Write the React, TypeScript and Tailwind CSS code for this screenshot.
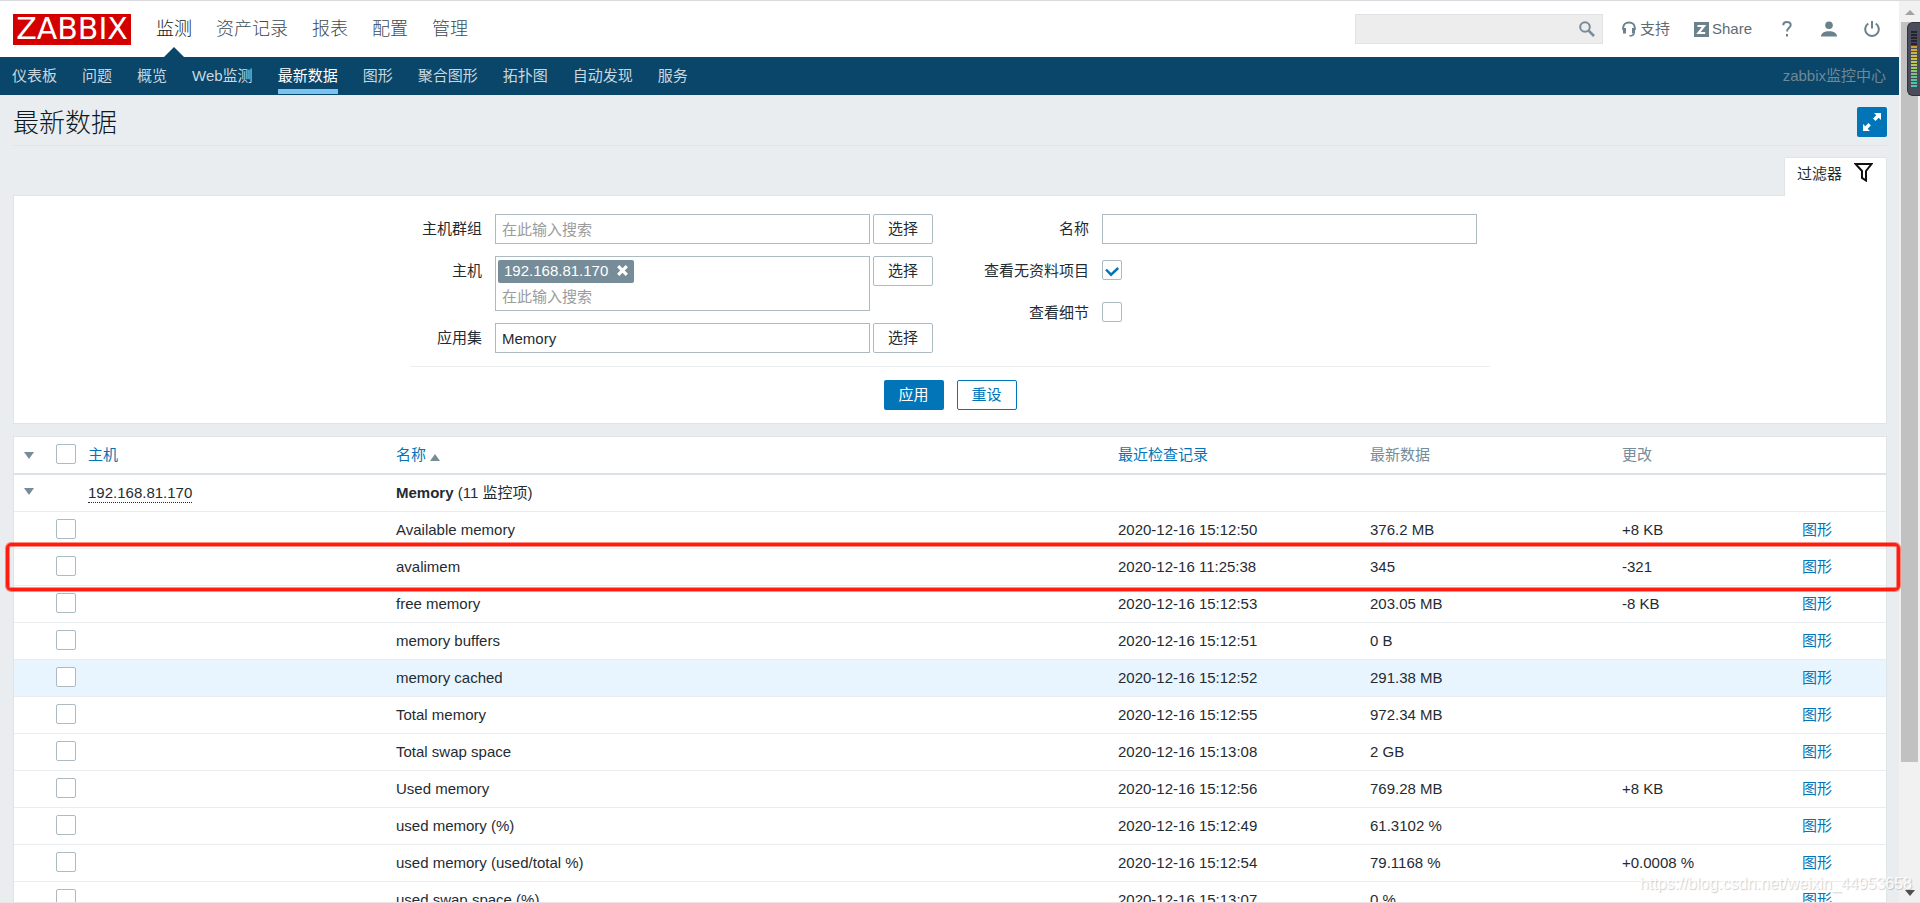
import { useState } from 'react'
import type { InputHTMLAttributes, ReactNode } from 'react'
import clsx from 'clsx'

type Item = {
  name: string
  lastCheck: string
  value: string
  change?: string
  hovered?: boolean
  marked?: boolean
}

const mainMenu = ['监测', '资产记录', '报表', '配置', '管理']
const subMenu = ['仪表板', '问题', '概览', 'Web监测', '最新数据', '图形', '聚合图形', '拓扑图', '自动发现', '服务']

const items: Item[] = [
  { name: 'Available memory', lastCheck: '2020-12-16 15:12:50', value: '376.2 MB', change: '+8 KB' },
  { name: 'avalimem', lastCheck: '2020-12-16 11:25:38', value: '345', change: '-321', marked: true },
  { name: 'free memory', lastCheck: '2020-12-16 15:12:53', value: '203.05 MB', change: '-8 KB' },
  { name: 'memory buffers', lastCheck: '2020-12-16 15:12:51', value: '0 B' },
  { name: 'memory cached', lastCheck: '2020-12-16 15:12:52', value: '291.38 MB', hovered: true },
  { name: 'Total memory', lastCheck: '2020-12-16 15:12:55', value: '972.34 MB' },
  { name: 'Total swap space', lastCheck: '2020-12-16 15:13:08', value: '2 GB' },
  { name: 'Used memory', lastCheck: '2020-12-16 15:12:56', value: '769.28 MB', change: '+8 KB' },
  { name: 'used memory (%)', lastCheck: '2020-12-16 15:12:49', value: '61.3102 %' },
  { name: 'used memory (used/total %)', lastCheck: '2020-12-16 15:12:54', value: '79.1168 %', change: '+0.0008 %' },
  { name: 'used swap space (%)', lastCheck: '2020-12-16 15:13:07', value: '0 %' },
]

const meterBars = [
  'bg-[#23252e]', 'bg-[#23252e]', 'bg-[#23252e]', 'bg-[#23252e]', 'bg-[#23252e]',
  'bg-[#d69a3c]', 'bg-[#d6a63c]', 'bg-[#d2b13f]', 'bg-[#cdbd42]', 'bg-[#c8c545]', 'bg-[#bcc950]',
  'bg-[#aec85c]', 'bg-[#9dc768]', 'bg-[#8cc574]', 'bg-[#7ac381]', 'bg-[#68c18e]', 'bg-[#58c19b]',
  'bg-[#4cc2a8]', 'bg-[#45c5b2]',
]

function Checkbox(props: InputHTMLAttributes<HTMLInputElement>) {
  return (
    <span className="relative block size-5">
      <input
        type="checkbox"
        className="peer block size-5 appearance-none rounded-xs border border-[#acbbc2] bg-white"
        {...props}
      />
      <svg
        className="pointer-events-none absolute inset-0 hidden size-5 peer-checked:block"
        viewBox="0 0 20 20"
        fill="none"
        stroke="#0275b8"
        strokeWidth="2.4"
      >
        <path d="M4 9.5 9 14.7 16.2 8" />
      </svg>
    </span>
  )
}

function Triangle({ up, className }: { up?: boolean; className?: string }) {
  return (
    <svg className={className} width="10" height="7" viewBox="0 0 10 7" fill="#768d99">
      <path d={up ? 'M0 7h10L5 0z' : 'M0 0h10L5 7z'} />
    </svg>
  )
}

function SelectButton() {
  return (
    <button type="button" className="h-[30px] w-[60px] rounded-xs border border-[#acbbc2] bg-white">
      选择
    </button>
  )
}

function Field({ id, label, wide, children }: { id: string; label: string; wide?: boolean; children: ReactNode }) {
  return (
    <div className="flex items-start">
      <label htmlFor={id} className={clsx('mr-[13px] text-right leading-[30px]', wide ? 'w-[139px]' : 'w-[72px]')}>
        {label}
      </label>
      <div className="flex items-start gap-[3px]">{children}</div>
    </div>
  )
}

function TopBar() {
  return (
    <header className="flex h-14 items-center bg-white pr-[19px] pl-[13px]">
      <a
        href="#home"
        className="flex h-[31px] w-[118px] items-center justify-center bg-[#d40000] font-['DejaVu_Sans',sans-serif] text-[30px] leading-none text-white"
      >
        ZABBIX
      </a>
      <nav className="ml-[25px] flex h-full gap-6 text-[18px] font-light">
        {mainMenu.map((name, i) => (
          <a
            key={name}
            href="#menu"
            className={clsx('relative flex items-center', i === 0 ? 'text-[#0f1a20]' : 'text-[#3c4a52]')}
          >
            {name}
            {i === 0 ? (
              <svg className="absolute bottom-0 left-2" width="20" height="10" viewBox="0 0 20 10" fill="#0a466a">
                <path d="M0 10 10 0l10 10z" />
              </svg>
            ) : null}
          </a>
        ))}
      </nav>

      <form className="ml-auto flex h-[30px] w-[248px] items-center border border-[#e0e2e4] bg-[#ededed] pr-[7px]">
        <input aria-label="搜索" className="h-full min-w-0 flex-1 bg-transparent px-2 outline-none" />
        <button type="button" aria-label="搜索">
          <svg width="16" height="16" viewBox="0 0 16 16" fill="none" stroke="#768d99" strokeWidth="2">
            <circle cx="6" cy="6" r="4.8" />
            <path d="m9.6 9.6 5.4 5.4" strokeWidth="2.6" />
          </svg>
        </button>
      </form>

      <div className="ml-[18px] flex items-center text-[#5d6c74]">
        <a href="#support" className="flex items-center gap-[3px]">
          <svg width="16" height="16" viewBox="0 0 16 16" fill="none" stroke="#6b818c">
            <path d="M2.2 9V6.8C2.2 3.6 4.6 1.4 8 1.4s5.8 2.2 5.8 5.4V9" strokeWidth="2" />
            <path d="M3.5 7v5.4M12.5 7v5.4" strokeWidth="3" />
            <path d="M13 12.2c0 1.6-1.4 2.6-4.6 2.6" strokeWidth="1.6" />
          </svg>
          支持
        </a>
        <a href="#share" className="ml-6 flex items-center gap-[3px]">
          <svg width="15" height="15" viewBox="0 0 15 15">
            <path d="M0 0h15v15H0z" fill="#6b818c" />
            <path d="M3.500 4h6.500L4.500 11h6.700" fill="none" stroke="#fff" strokeWidth="2.2" />
          </svg>
          Share
        </a>
        <a href="#help" aria-label="帮助" className="ml-[30px]">
          <svg width="10" height="16" viewBox="0 0 10 16" fill="none" stroke="#6b818c" strokeWidth="2">
            <path d="M1.2 4.2C1.3 2.2 2.8 1 4.900 1c2.200 0 3.800 1.200 3.800 3.100C8.700 6.800 5 7 5 10.500M5 13v2.500" />
          </svg>
        </a>
        <a href="#profile" aria-label="用户" className="ml-[29px]">
          <svg width="16" height="16" viewBox="0 0 16 16" fill="#6b818c">
            <circle cx="8" cy="4.200" r="3.800" />
            <path d="M0 15.500c0-3.400 3.500-5.200 8-5.200s8 1.800 8 5.200z" />
          </svg>
        </a>
        <a href="#logout" aria-label="退出" className="ml-[27px]">
          <svg width="16" height="16" viewBox="0 0 16 16" fill="none" stroke="#6b818c" strokeWidth="2">
            <path d="M4.300 2.500a6.800 6.800 0 1 0 7.400 0M8 0v7.500" />
          </svg>
        </a>
      </div>
    </header>
  )
}

function SubBar() {
  return (
    <div className="flex h-[38px] justify-between bg-[#0a466a] pr-[13px] pl-3">
      <nav className="flex gap-[25px]">
        {subMenu.map((name) => (
          <a
            key={name}
            href="#section"
            className={clsx(
              'mb-px flex items-center border-b-[5px] pt-[5px]',
              name === '最新数据' ? 'border-[#7ac3f0] text-white' : 'border-transparent text-[#c9d6de]',
            )}
          >
            {name}
          </a>
        ))}
      </nav>
      <div className="self-center text-[#6f8996]">zabbix监控中心</div>
    </div>
  )
}

function FilterPanel() {
  const [showEmpty, setShowEmpty] = useState(true)
  const [showDetails, setShowDetails] = useState(false)

  return (
    <section>
      <div className="flex justify-end">
        <button
          type="button"
          className="-mb-px flex h-[39px] items-start gap-3 rounded-t-xs border border-b-0 border-[#dfe4e7] bg-white pt-[5px] pr-[13px] pl-3"
        >
          <span>过滤器</span>
          <svg width="19" height="19" viewBox="0 0 19 19" fill="none" stroke="#111" strokeWidth="2">
            <path d="M1.500 1h16l-5.500 7V17.500l-4-2.600V8z" />
          </svg>
        </button>
      </div>

      <form className="border border-[#dfe4e7] bg-white pt-[18px] pb-[13px]">
        <div className="mx-auto w-[1080px]">
          <div className="grid grid-cols-2 border-b border-[#ebeef0] pb-[13px]">
            <div className="flex flex-col gap-3">
              <Field id="groups" label="主机群组">
                <input
                  id="groups"
                  placeholder="在此输入搜索"
                  className="h-[30px] w-[375px] border border-[#acbbc2] px-1.5 placeholder:text-[#9c9c9c]"
                />
                <SelectButton />
              </Field>
              <Field id="hosts" label="主机">
                <div className="h-[55px] w-[375px] border border-[#acbbc2] px-0.5 pt-[3px]">
                  <div className="flex h-[23px] w-fit items-center gap-[9px] rounded-xs bg-[#768d99] px-1.5 pb-0.5 text-white">
                    192.168.81.170
                    <button type="button" aria-label="移除">
                      <svg width="11" height="11" viewBox="0 0 11 11" stroke="#fff" strokeWidth="3.200">
                        <path d="m1.200 1.200 8.600 8.600M9.800 1.200 1.200 9.800" />
                      </svg>
                    </button>
                  </div>
                  <input
                    id="hosts"
                    placeholder="在此输入搜索"
                    className="block h-[26px] w-full px-1 outline-none placeholder:text-[#9c9c9c]"
                  />
                </div>
                <SelectButton />
              </Field>
              <Field id="application" label="应用集">
                <input
                  id="application"
                  defaultValue="Memory"
                  className="h-[30px] w-[375px] border border-[#acbbc2] px-1.5"
                />
                <SelectButton />
              </Field>
            </div>

            <div className="flex flex-col gap-3">
              <Field id="name" label="名称" wide>
                <input id="name" className="h-[30px] w-[375px] border border-[#acbbc2] px-1.5" />
              </Field>
              <Field id="show-empty" label="查看无资料项目" wide>
                <div className="pt-1">
                  <Checkbox id="show-empty" checked={showEmpty} onChange={(e) => setShowEmpty(e.target.checked)} />
                </div>
              </Field>
              <Field id="show-details" label="查看细节" wide>
                <div className="pt-1">
                  <Checkbox id="show-details" checked={showDetails} onChange={(e) => setShowDetails(e.target.checked)} />
                </div>
              </Field>
            </div>
          </div>

          <div className="mt-[13px] flex justify-center gap-[13px]">
            <button type="button" className="h-[30px] w-[60px] rounded-xs bg-[#0275b8] text-white">
              应用
            </button>
            <button
              type="reset"
              className="h-[30px] w-[60px] rounded-xs border border-[#0275b8] bg-white text-[#0275b8]"
            >
              重设
            </button>
          </div>
        </div>
      </form>
    </section>
  )
}

function ItemRow({ item }: { item: Item }) {
  return (
    <tr className={clsx('relative h-[37px] border-b border-[#ebeef0]', item.hovered && 'bg-[#e8f5ff]')}>
      <td>
        {item.marked ? (
          <span className="pointer-events-none absolute -top-[5px] -right-3.5 -bottom-[7px] -left-2 z-10 rounded-[5px] border-[3px] border-[#ff1d10] shadow-[0_0_0_1px_#ff1d1080,inset_0_0_0_1px_#ff1d1080]" />
        ) : null}
      </td>
      <td className="pb-0.5">
        <Checkbox aria-label={item.name} />
      </td>
      <td />
      <td>{item.name}</td>
      <td>{item.lastCheck}</td>
      <td>{item.value}</td>
      <td>{item.change}</td>
      <td className="text-[#0275b8]">
        <a href="#graph">图形</a>
      </td>
    </tr>
  )
}

function ItemTable() {
  return (
    <div className="mt-3 border border-[#dfe4e7] bg-white">
      <table className="w-full table-fixed text-left">
        <colgroup>
          <col className="w-[42px]" />
          <col className="w-8" />
          <col className="w-[308px]" />
          <col />
          <col className="w-[252px]" />
          <col className="w-[252px]" />
          <col className="w-[180px]" />
          <col className="w-[84px]" />
        </colgroup>
        <thead>
          <tr className="h-[37px] border-b-2 border-[#dce2e5] text-[#768d99] [&>th]:font-normal">
            <th>
              <button type="button" aria-label="全部折叠" className="block pl-2.5">
                <Triangle />
              </button>
            </th>
            <th className="pb-0.5">
              <Checkbox aria-label="全选" />
            </th>
            <th>
              <a href="#host" className="text-[#0275b8]">主机</a>
            </th>
            <th>
              <a href="#name" className="flex items-center gap-1 text-[#0275b8]">
                名称
                <Triangle up className="mt-1" />
              </a>
            </th>
            <th>
              <a href="#last-check" className="text-[#0275b8]">最近检查记录</a>
            </th>
            <th>最新数据</th>
            <th>更改</th>
            <th />
          </tr>
        </thead>
        <tbody>
          <tr className="h-[37px] border-b border-[#ebeef0]">
            <td className="pb-0.5">
              <button type="button" aria-label="折叠" className="block pl-2.5">
                <Triangle />
              </button>
            </td>
            <td />
            <td>
              <a href="#host-menu" className="inline-block border-b border-dotted border-[#1f2c33] leading-[18px]">
                192.168.81.170
              </a>
            </td>
            <td colSpan={5}>
              <b className="font-bold">Memory</b> (11 监控项)
            </td>
          </tr>
          {items.map((item) => (
            <ItemRow key={item.name} item={item} />
          ))}
        </tbody>
      </table>
    </div>
  )
}

function ScrollRail() {
  return (
    <div className="relative flex w-[21px] shrink-0 flex-col items-center bg-[#f1f1f1]">
      <svg className="mt-[9px] mb-[7px] shrink-0" width="10" height="5" viewBox="0 0 10 5" fill="#a3a3a3">
        <path d="M0 5h10L5 0z" />
      </svg>
      <div className="h-[82%] w-[17px] bg-[#c1c1c1]" />
      <svg className="mt-auto mb-[7px] shrink-0" width="10" height="6" viewBox="0 0 10 6" fill="#505050">
        <path d="M0 0h10L5 6z" />
      </svg>
      <div className="absolute top-[21px] right-0 flex h-[74px] w-[13px] flex-col items-center gap-px rounded-l-md border border-r-0 border-[#2f313c] bg-[#4a4c5b] pt-2">
        {meterBars.map((color, i) => (
          <i key={i} className={clsx('h-0.5 w-1.5', color)} />
        ))}
      </div>
    </div>
  )
}

export default function App() {
  return (
    <div className="relative flex h-screen overflow-hidden border-t border-[#d9dade] bg-[#e9edf0] font-['Liberation_Sans','Noto_Sans_CJK_SC',sans-serif] text-[15px] leading-[22px] text-[#1f2c33]">
      <div className="min-w-0 flex-1">
        <TopBar />
        <SubBar />
        <main className="pr-3 pl-[13px]">
          <div className="mb-[11px] flex h-[51px] items-end justify-between border-b border-[#dfe4e7] pb-2">
            <h1 className="text-[26px] leading-7 font-light text-[#0f1a20]">最新数据</h1>
            <button
              type="button"
              aria-label="全屏"
              className="flex size-[30px] items-center justify-center rounded-xs bg-[#0275b8]"
            >
              <svg width="20" height="20" viewBox="0 0 20 20" fill="#fff">
                <path d="M12 1h7v7l-2.300-2.300-3.200 3.200-2.400-2.400 3.200-3.200z" />
                <path d="M8 19H1v-7l2.300 2.300 3.200-3.200 2.400 2.400-3.200 3.200z" />
              </svg>
            </button>
          </div>
          <FilterPanel />
          <ItemTable />
        </main>
      </div>
      <ScrollRail />
      <div className="pointer-events-none absolute right-2 bottom-2 text-[16px] text-white/90 [text-shadow:1px_1px_1px_#00000033]">
        https://blog.csdn.net/weixin_44953658
      </div>
      <div className="absolute inset-x-0 bottom-0 h-px bg-[#f3dfe4]" />
    </div>
  )
}
